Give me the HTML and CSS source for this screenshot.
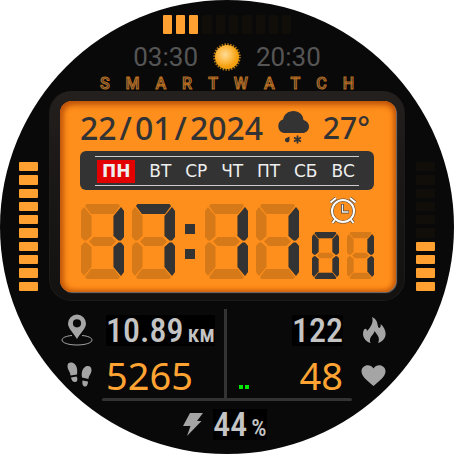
FILE: index.html
```html
<!DOCTYPE html>
<html lang="ru">
<head>
<meta charset="utf-8">
<title>Smartwatch</title>
<link rel="stylesheet" href="styles.css">
</head>
<body>
<svg class="defs" aria-hidden="true">
  <defs>
    <path id="sa" d="M4 2 5.500 0H37.500L39 2 33 10H10Z"/>
    <path id="sb" d="M40 3 43 7V33L40 36.500H37.500L32.500 32V12Z"/>
    <path id="sc" d="M40 72 43 68V42L40 38.500H37.500L32.500 43V63Z"/>
    <path id="sd" d="M4 73 5.500 75H37.500L39 73 33 65H10Z"/>
    <path id="se" d="M3 72 0 68V42L3 38.500H5.500L10.500 43V63Z"/>
    <path id="sf" d="M3 3 0 7V33L3 36.500H5.500L10.500 32V12Z"/>
    <path id="sg" d="M8 37.500 12.500 33H30.500L35 37.500 30.500 42H12.500Z"/>
    <g id="all"><use href="#sa"/><use href="#sb"/><use href="#sc"/><use href="#sd"/><use href="#se"/><use href="#sf"/><use href="#sg"/></g>
    <symbol id="d1" viewBox="0 0 43 75"><use href="#all" class="ghost"/><use href="#sb"/><use href="#sc"/></symbol>
    <symbol id="d7" viewBox="0 0 43 75"><use href="#all" class="ghost"/><use href="#sa"/><use href="#sb"/><use href="#sc"/></symbol>
    <symbol id="d0" viewBox="0 0 43 75"><use href="#all" class="ghost"/><use href="#sa"/><use href="#sb"/><use href="#sc"/><use href="#sd"/><use href="#se"/><use href="#sf"/></symbol>
  </defs>
</svg>
<main class="watch">
  <div class="gauge gauge-top"><i class="on"></i><i class="on"></i><i class="on"></i><i></i><i></i><i></i><i></i><i></i><i></i><i></i></div>
  <div class="daylight">
    <time>03:30</time>
    <svg class="sun" viewBox="0 0 28 28">
      <defs><radialGradient id="glow" cx=".42" cy=".4"><stop offset="0" stop-color="#ffdc96"/><stop offset=".6" stop-color="#fdba45"/><stop offset="1" stop-color="#f3a010"/></radialGradient></defs>
      <circle cx="14" cy="14" r="12.500" fill="none" stroke="#b07812" stroke-width="2.500" stroke-dasharray="1.500 1.300"/>
      <circle cx="14" cy="14" r="12" fill="url(#glow)"/>
    </svg>
    <time>20:30</time>
  </div>
  <h1 class="brand"><span>S</span><span>M</span><span>A</span><span>R</span><span>T</span><span>W</span><span>A</span><span>T</span><span>C</span><span>H</span></h1>
  <div class="middle">
    <div class="gauge gauge-side"><i class="on"></i><i class="on"></i><i class="on"></i><i class="on"></i><i class="on"></i><i class="on"></i><i class="on"></i><i class="on"></i><i class="on"></i><i class="on"></i></div>
    <div class="bezel">
      <section class="screen">
        <div class="today">
          <time class="date">22<span class="slash">/</span>01<span class="slash">/</span>2024</time>
          <svg class="cloud" viewBox="0 0 32 33">
            <path d="M7 22A7 7 0 0 1 6 8.500C7 3.500 11 0 16.500 0 22 0 26 3.500 26.500 9 30 10 32 12.500 32 15.500 32 19.500 29 22 25.500 22Z"/>
            <path d="M12.500 25.500V28.500A2.300 2.300 0 1 1 8.500 27.500Z"/>
            <path d="M20.500 24.500V32.500M17 26.500 24 30.500M24 26.500 17 30.500" stroke="#333" stroke-width="1.800"/>
          </svg>
          <span class="temp">27°</span>
        </div>
        <div class="week">
          <ol class="days"><li class="active">ПН</li><li>ВТ</li><li>СР</li><li>ЧТ</li><li>ПТ</li><li>СБ</li><li>ВС</li></ol>
        </div>
        <div class="clock" role="img" aria-label="17:11:01">
          <svg class="digit"><use href="#d1"/></svg>
          <svg class="digit"><use href="#d7"/></svg>
          <span class="colon"><i></i><i></i></span>
          <svg class="digit"><use href="#d1"/></svg>
          <svg class="digit"><use href="#d1"/></svg>
          <div class="side">
            <svg class="alarm" viewBox="0 0 28 29">
              <g fill="none" stroke="#5a4a3a" stroke-width="3.200"><circle cx="14" cy="15" r="11"/><path d="M1.500 6.500 7 2M26.500 6.500 21 2M6 23.500 3.500 27M22 23.500 24.500 27"/></g>
              <g fill="none" stroke="#fff" stroke-width="2"><circle cx="14" cy="15" r="11"/><path d="M1.500 6.500 7 2M26.500 6.500 21 2M6 23.500 3.500 27M22 23.500 24.500 27"/></g>
              <path d="M13.500 8V16H20" fill="none" stroke="#5a4a3a" stroke-width="3"/>
              <path d="M13.500 8.500V16H19.500" fill="none" stroke="#eee" stroke-width="1.300"/>
            </svg>
            <div class="seconds">
              <svg class="digit small"><use href="#d0"/></svg>
              <svg class="digit small"><use href="#d1"/></svg>
            </div>
          </div>
        </div>
      </section>
    </div>
    <div class="gauge gauge-side"><i></i><i></i><i></i><i></i><i></i><i></i><i class="on"></i><i class="on"></i><i class="on"></i><i class="on"></i></div>
  </div>
  <div class="stats">
    <div class="column left">
      <div class="stat">
        <svg class="icon" viewBox="0 0 32 32">
          <path d="M11 21.500C5 22 1 23.800 1 26 1 28.800 7.500 31 16 31S31 28.800 31 26C31 23.800 27 22 21 21.500" fill="none" stroke="#a5a5a5"/>
          <path fill-rule="evenodd" d="M16 25C13 19.500 7 14.500 7 9.500A9 9 0 0 1 25 9.500C25 14.500 19 19.500 16 25ZM16 5.200A4.100 4.100 0 1 0 16 13.400 4.100 4.100 0 1 0 16 5.200Z"/>
        </svg>
        <span class="narrow">10.89<small>км</small></span>
      </div>
      <div class="stat">
        <svg class="icon" viewBox="0 0 32 32">
          <path d="M6.500 7C6.500 4 8.500 3 11 3.500 15 4.500 17 9 16 15.500L9.500 16.500C9.500 13 6.500 11 6.500 7Z"/>
          <path d="M10 18.500 15.500 17.500C17 20 16.500 22.500 14.500 23 12 23.500 10.500 21.500 10 18.500Z"/>
          <path d="M30.500 11C30.500 8 28.500 6.500 26 7 22 8 20 12.500 21 18.500L27.500 20C27.500 16.500 30.500 15 30.500 11Z"/>
          <path d="M21.500 21.500 27 22.500C27 26 25.500 28 23.500 27.500 21.500 27 21 24 21.500 21.500Z"/>
        </svg>
        <span class="count">5265</span>
      </div>
    </div>
    <div class="column right">
      <div class="stat">
        <span class="narrow">122</span>
        <svg class="icon" viewBox="0 0 26 28">
          <path d="M11 1C18 4 15.500 9.500 18 12 19.500 11.500 20 10 19.500 8 24.500 12 26.500 19 22.500 23.500 21 25.500 19 26.500 17 27 19.500 22 16.500 19 13.500 15 13.500 18.500 7 21 9.500 27 5.500 26 2 22 2 18 2 11.500 6 11.500 6 15 9.500 12 13 6 11 1Z"/>
        </svg>
      </div>
      <div class="stat">
        <span class="dots"><i></i><i></i></span>
        <span class="count">48</span>
        <svg class="icon" viewBox="0 0 26 28">
          <path d="M12.500 25C8 21 .5 16 .5 10.500.5 4 9 2 12.500 7.500 16 2 24.500 4 24.500 10.500 24.500 16 17 21 12.500 25Z"/>
        </svg>
      </div>
    </div>
  </div>
  <div class="battery">
    <svg class="bolt" viewBox="0 0 21 23"><path d="M7 0H20L14 8H18.500L4 23 7.500 13H0Z"/></svg>
    <span class="narrow">44<small>%</small></span>
  </div>
</main>
</body>
</html>
```

FILE: styles.css
```css
* { box-sizing: border-box; }

body {
  margin: 0;
  background: #fff;
  font-family: Roboto, "Liberation Sans", sans-serif;
}

.defs { position: absolute; width: 0; height: 0; }

.watch {
  width: 100%;
  aspect-ratio: 1;
  padding-top: 15px;
  border-radius: 50%;
  overflow: hidden;
  background: #090909;
  display: flex;
  flex-direction: column;
}

.gauge { display: flex; gap: 4px; }
.gauge i { flex: 1; background: #110d08; border-radius: 1px; }
.gauge .on { background: #ffa030; }
.gauge-top { width: 129px; height: 19px; margin: 0 auto; }
.gauge-side { flex-direction: column; width: 19px; height: 129px; margin-bottom: 10px; }

.daylight {
  display: flex;
  justify-content: center;
  align-items: center;
  gap: 15px;
  height: 28px;
  margin-top: 9px;
  font-size: 26px;
  line-height: 28px;
  color: #555;
}
.sun { width: 28px; height: 28px; }

.brand {
  display: flex;
  justify-content: space-between;
  width: 56%;
  margin: 5px auto 0;
  font-size: 16px;
  line-height: 15px;
  font-weight: 500;
  color: #333a42;
  -webkit-text-stroke: 1px #b96d1c;
}

.middle {
  display: flex;
  align-items: flex-end;
  gap: 11px;
  padding: 0 19px;
}

.bezel {
  flex: 1;
  padding: 10px 8px 8px 10px;
  border: 1px solid #1d1a19;
  border-top: 0;
  border-radius: 22px;
  background: linear-gradient(#24201e, #1c1918 30%, #131211);
}

.screen {
  padding: 10px 22px 13px 20px;
  border-radius: 12px;
  background: #ff8f1c;
  box-shadow: inset 0 3px 7px #b8500a, inset 3px 0 6px #c65a0c, inset -2px -1px 5px #d96a10, 1px 1px 1px #77706a;
  color: #333;
}

.today {
  display: flex;
  align-items: center;
  justify-content: space-between;
  height: 33px;
  padding-right: 4px;
  font: 500 32px/32px "Noto Sans", sans-serif;
}
.slash { margin: 0 3px; }
.cloud { width: 32px; height: 33px; fill: #333; }
.temp { font-size: 30px; }

.week {
  margin-top: 7px;
  padding: 5px 15px 4px;
  border-radius: 6px;
  background: #333;
}
.days {
  display: flex;
  justify-content: space-between;
  margin: 0;
  padding: 3px 4px 2px 2px;
  border-top: 1px solid #ccc;
  border-bottom: 1px solid #ccc;
  list-style: none;
  font: 17px/23px "DejaVu Sans", sans-serif;
  color: #eee;
}
.active { padding: 0 5px; background: #e30000; font-weight: 700; }

.clock {
  display: flex;
  align-items: flex-end;
  gap: 8px;
  margin-top: 6px;
  padding-left: 1px;
}
.digit { width: 43px; height: 75px; fill: #333; }
.ghost { fill: #d67a19; }
.colon {
  display: flex;
  flex-direction: column;
  gap: 15px;
  margin: 0 2px 20px;
}
.colon i { width: 10px; height: 10px; background: #333; }
.side {
  display: flex;
  flex-direction: column;
  align-items: center;
  gap: 7px;
  margin-left: auto;
}
.alarm { width: 28px; height: 29px; }
.seconds { display: flex; gap: 8px; }
.small { width: 27px; height: 47px; }

.stats {
  display: flex;
  position: relative;
  margin-top: 8px;
}
.stats::after {
  content: "";
  position: absolute;
  left: 22.5%;
  right: 22.5%;
  bottom: -3px;
  height: 3px;
  border-radius: 2px;
  background: #333;
}
.column { width: 50%; }
.left { padding-left: 61px; border-right: 3px solid #333; }
.right { padding: 0 67px 0 12px; }
.stat { display: flex; align-items: center; gap: 13px; height: 42px; }
.stat + .stat { height: 47px; }
.right .stat { justify-content: flex-end; gap: 18px; }
.icon { width: 32px; height: 32px; fill: #a5a5a5; }
.right .icon { width: 26px; height: 28px; }

.narrow {
  background: #000;
  color: #c4c4c4;
  font: 500 34px/31px "Roboto Condensed", "Liberation Sans Narrow", "Liberation Sans", sans-serif;
}
.narrow small { margin-left: 4px; font-size: 24px; line-height: 24px; }
.count { color: #ffa333; font: 38px/38px "Noto Sans", sans-serif; }

.dots { display: flex; gap: 2px; margin-right: auto; align-self: flex-end; padding-bottom: 9px; }
.dots i { width: 4px; height: 4px; background: #00e800; }

.battery {
  display: flex;
  align-items: center;
  justify-content: center;
  gap: 9px;
  margin: 11px 4px 0 0;
}
.bolt { width: 21px; height: 23px; fill: #a5a5a5; }
```
